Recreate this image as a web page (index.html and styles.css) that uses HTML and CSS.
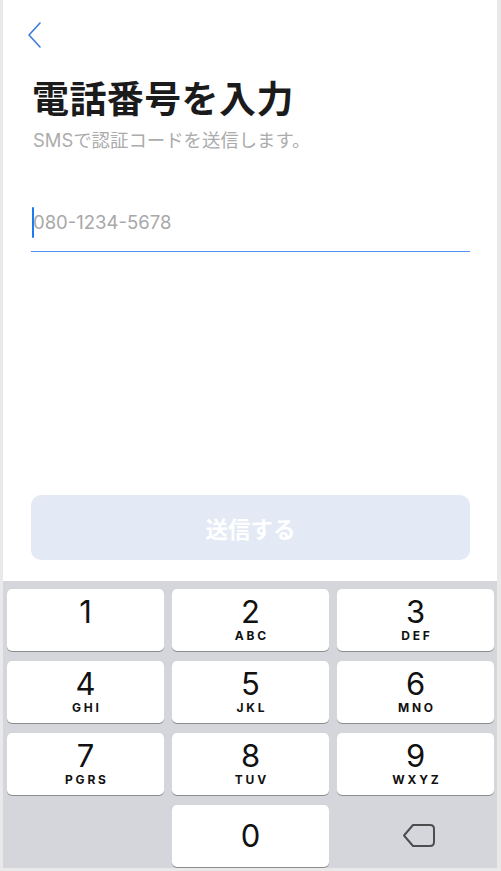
FILE: index.html
```html
<!DOCTYPE html>
<html lang="ja">
<head>
<meta charset="utf-8">
<title>電話番号を入力</title>
<link rel="stylesheet" href="styles.css">
</head>
<body>
<div class="screen">
  <main class="content">
    <div class="nav">
      <svg class="back" width="16" height="28" viewBox="0 0 16 28" aria-label="戻る">
        <path d="M13 2 L2 14 L13 26" fill="none" stroke="#3b7bd6" stroke-width="1.6" stroke-linecap="round" stroke-linejoin="round"/>
      </svg>
    </div>
    <h1 class="title">電話番号を入力</h1>
    <p class="subtitle">SMSで認証コードを送信します。</p>
    <div class="field">
      <span class="caret"></span><span class="placeholder">080-1234-5678</span>
    </div>
    <div class="spacer"></div>
    <button class="submit" disabled>送信する</button>
  </main>
  <div class="keyboard">
    <div class="key"><span class="num">1</span><span class="letters"></span></div>
    <div class="key"><span class="num">2</span><span class="letters">ABC</span></div>
    <div class="key"><span class="num">3</span><span class="letters">DEF</span></div>
    <div class="key"><span class="num">4</span><span class="letters">GHI</span></div>
    <div class="key"><span class="num">5</span><span class="letters">JKL</span></div>
    <div class="key"><span class="num">6</span><span class="letters">MNO</span></div>
    <div class="key"><span class="num">7</span><span class="letters">PGRS</span></div>
    <div class="key"><span class="num">8</span><span class="letters">TUV</span></div>
    <div class="key"><span class="num">9</span><span class="letters">WXYZ</span></div>
    <div class="key key-empty"></div>
    <div class="key key-zero"><span class="num">0</span></div>
    <div class="key key-empty key-del">
      <svg width="34" height="26" viewBox="0 0 34 26" aria-label="削除">
        <path d="M11 2 H28 Q32 2 32 6 V19 Q32 23 28 23 H11 L2 12.5 Z" fill="none" stroke="#4d4d4f" stroke-width="2" stroke-linejoin="round"/>
      </svg>
    </div>
  </div>
</div>
</body>
</html>
```
FILE: styles.css
```css
* { box-sizing: border-box; }
html, body { margin: 0; padding: 0; }
body {
  background: #e9e9ea;
  width: 501px;
  height: 871px;
  font-family: "Inter", "Noto Sans CJK JP", sans-serif;
}
.screen {
  margin-left: 3px;
  width: 494px;
  height: 868px;
  background: #ffffff;
  display: flex;
  flex-direction: column;
}
.content {
  flex: 1;
  display: flex;
  flex-direction: column;
  padding: 0 27px 0 28px;
}
.nav {
  height: 48px;
  padding-top: 21px;
  margin-left: -4px;
}
.back { display: block; }
.title {
  margin: 27px 0 0 1px;
  font-family: "Noto Sans CJK JP", sans-serif;
  font-size: 37px;
  line-height: 44px;
  font-weight: 700;
  color: #1b1b1b;
  letter-spacing: 0.4px;
}
.subtitle {
  margin: 9px 0 0 2px;
  font-family: "Inter", "Noto Sans CJK JP", sans-serif;
  font-size: 18.4px;
  line-height: 24px;
  color: #acacac;
}
.field {
  margin-top: 54px;
  height: 46px;
  border-bottom: 1px solid #4f95f0;
  display: flex;
  align-items: flex-start;
}
.caret {
  width: 2px;
  height: 31px;
  background: #1a7cf4;
  margin-left: 1px;
  margin-top: 1px;
  border-radius: 1px;
}
.placeholder {
  margin-left: -1px;
  margin-top: 1px;
  font-family: "Inter", sans-serif;
  font-size: 18.5px;
  line-height: 31px;
  color: #a8a8a8;
}
.spacer { flex: 1; }
.submit {
  margin-bottom: 21px;
  height: 65px;
  width: 100%;
  border: 0;
  border-radius: 10px;
  background: #e3eaf5;
  color: #ffffff;
  font-family: "Noto Sans CJK JP", sans-serif;
  font-weight: 700;
  font-size: 22.5px;
  padding: 0;
}
.keyboard {
  background: #d5d6db;
  height: 287px;
  padding: 8px 3px 1px 4px;
  display: grid;
  grid-template-columns: repeat(3, 157px);
  grid-template-rows: repeat(4, 62px);
  column-gap: 8px;
  row-gap: 10px;
}
.key {
  background: #ffffff;
  border-radius: 5px;
  box-shadow: 0 1px 0 #8b8c90;
  display: flex;
  flex-direction: column;
  align-items: center;
  padding-top: 6px;
  color: #111111;
}
.num {
  font-family: "Inter", sans-serif;
  font-size: 31px;
  line-height: 34px;
  font-weight: 400;
}
.letters {
  font-family: "Inter", sans-serif;
  font-size: 12px;
  font-weight: 700;
  letter-spacing: 2.8px;
  margin-right: -2.8px;
  line-height: 14px;
  margin-top: 0;
}
.key-empty {
  background: transparent;
  box-shadow: none;
}
.key-zero {
  justify-content: center;
  padding-top: 0;
}
.key-del {
  justify-content: center;
  padding-top: 0;
}
.key-del svg { display: block; margin-left: 7px; }
```
